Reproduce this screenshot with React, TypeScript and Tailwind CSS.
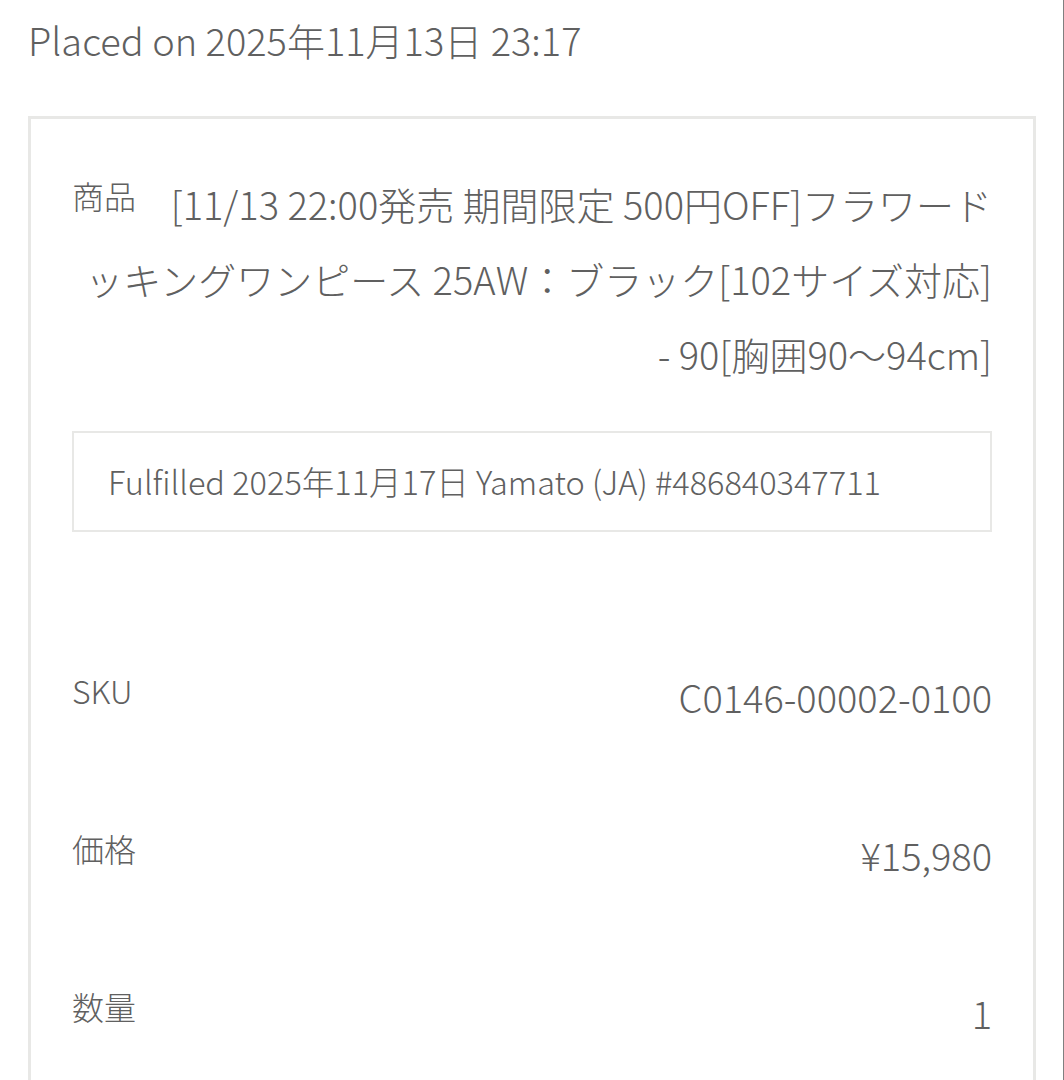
import React from 'react';

const rows = [
  { label: 'SKU', value: 'C0146-00002-0100' },
  { label: '価格', value: '¥15,980' },
  { label: '数量', value: '1' },
];

export default function App() {
  return (
    <div className="min-h-screen bg-white border-r border-[#808080] pl-[28px] pr-[27px] pt-[14px] text-[#606060] font-extralight font-['Noto_Sans_CJK_JP','Noto_Sans',sans-serif]">
      <h1 className="text-[38px] leading-[52px] font-extralight">Placed on 2025年11月13日 23:17</h1>

      <div className="mt-[50px] border-[3px] border-[#e8e8e6] px-[41px] pt-[47px] pb-[90px]">
        <p className="text-right text-[38px] leading-[75px]">
          <span className="float-left mr-[32px] text-[32px] leading-[58px]">商品</span>
          [11/13 22:00発売 期間限定 500円OFF]フラワード
          <br />
          ッキングワンピース 25AW：ブラック[102サイズ対応]
          <br />
          - 90[胸囲90〜94cm]
        </p>

        <div className="mt-[40px] flex h-[101px] items-center border-2 border-[#e8e8e6] px-[34px] text-[32.5px]">
          Fulfilled 2025年11月17日 Yamato (JA) #486840347711
        </div>

        <div className="mt-[140px] flex flex-col gap-[108px]">
          {rows.map((row) => (
            <div key={row.label} className="flex items-start justify-between">
              <span className="text-[32px] leading-[36px]">{row.label}</span>
              <span className="text-[38px] leading-[50px]">{row.value}</span>
            </div>
          ))}
        </div>
      </div>
    </div>
  );
}
